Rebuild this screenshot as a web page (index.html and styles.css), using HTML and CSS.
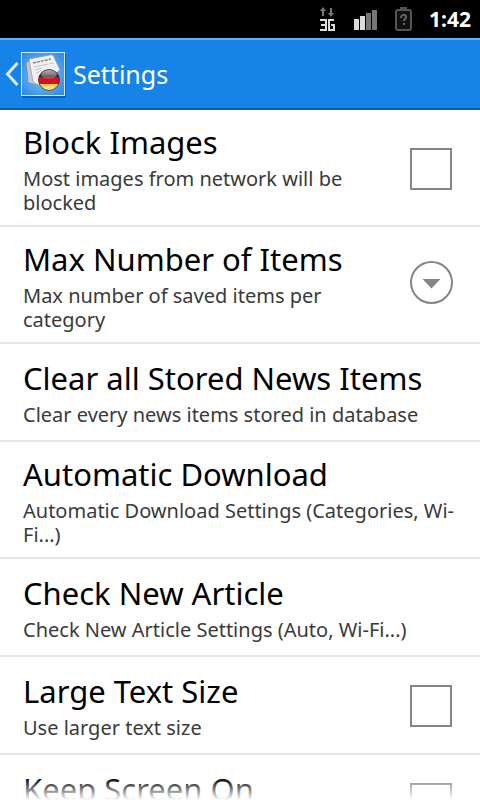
FILE: index.html
```html
<!DOCTYPE html>
<html lang="en">
<head>
<meta charset="utf-8">
<meta name="viewport" content="width=device-width, initial-scale=1">
<title>Settings</title>
<link rel="stylesheet" href="styles.css">
</head>
<body>
<div class="status">
  <svg class="status-icon" width="22" height="28" viewBox="0 0 22 28" aria-hidden="true">
    <g fill="none" stroke="#777" stroke-width="2"><path d="M7 11V5M15 3v6"/></g>
    <path fill="#777" d="M4 6l3-4 3 4zM12 8h6l-3 4z"/>
    <g fill="none" stroke="#ddd" stroke-width="2"><path d="M4 15h6v10H4M5 20h5M18 15h-5v10h5v-5h-3"/></g>
  </svg>
  <svg class="status-icon" width="26" height="28" viewBox="0 0 26 28" aria-hidden="true">
    <path fill="#ddd" d="M1 14h5v11H1zM7 11h5v14H7z"/>
    <path fill="#777" d="M13 8h5v17h-5zM19 5h5v20h-5z"/>
  </svg>
  <svg class="status-icon battery" width="20" height="28" viewBox="0 0 20 28" aria-hidden="true">
    <path fill="#555" d="M6 2h7v3H6z"/>
    <rect x="2" y="5" width="15" height="20" rx="2" fill="#111" stroke="#555" stroke-width="2"/>
    <path d="M7 13c0-4 5-4 5-1 0 2-2 2-2 4" fill="none" stroke="#666" stroke-width="2"/>
    <path fill="#666" d="M9 18h2v2H9z"/>
  </svg>
  <time class="clock">1:42</time>
</div>
<header class="bar">
  <a class="up" href="#" aria-label="Back">
    <svg width="66" height="56" viewBox="0 0 66 56" aria-hidden="true">
      <defs>
        <radialGradient id="glow" cx=".5" cy=".5" r=".7"><stop offset="0" stop-color="#a5d4fb"/><stop offset=".5" stop-color="#57a9ef"/><stop offset="1" stop-color="#2787e0"/></radialGradient>
        <linearGradient id="gloss" x1="0" y1="0" x2="0" y2="1"><stop offset="0" stop-color="#fff" stop-opacity=".7"/><stop offset="1" stop-color="#fff" stop-opacity=".12"/></linearGradient>
        <clipPath id="ball"><circle cx="49" cy="34" r="10.500"/></clipPath>
      </defs>
      <path d="M17.500 17L7.500 28 17.500 39" fill="none" stroke="#d9ecff" stroke-width="3"/>
      <rect x="22" y="8" width="44" height="44" fill="#0a4f94" opacity=".65"/>
      <rect x="21.500" y="6.500" width="43" height="43" fill="url(#glow)" stroke="#cde6fc"/>
      <path d="M26 17l5-4 9 27-11-3q-2-1-1-4z" fill="#c7c9d2" stroke="#777d8c" stroke-width=".7"/>
      <path d="M29 13l21-4q3-1 4 2l6 13-20 16-7-4z" fill="#f1f1f5" stroke="#8b93a5" stroke-width=".7"/>
      <path d="M33 17l18-4" stroke="#888" stroke-width="1.500" stroke-dasharray="3 1"/>
      <path d="M34 21l14-3M35 24l7-2M36 27l5-2M49 18l5-1" stroke="#c5c7ce"/>
      <g clip-path="url(#ball)">
        <path fill="#302a30" d="M38 23h22v9H38z"/>
        <path fill="#d50f28" d="M38 31h22v7H38z"/>
        <path fill="#f6d04b" d="M38 38h22v8H38z"/>
        <ellipse cx="49" cy="28" rx="8" ry="5" fill="url(#gloss)"/>
        <ellipse cx="49" cy="43" rx="6" ry="3" fill="#fff" opacity=".3"/>
      </g>
      <circle cx="49" cy="34" r="10.500" fill="none" stroke="#4d2730" stroke-width=".8"/>
    </svg>
  </a>
  <h1 class="heading">Settings</h1>
</header>
<main class="list">
  <label class="row tall">
    <span class="text"><span class="title">Block Images</span><span class="sub">Most images from network will be blocked</span></span>
    <input class="check" type="checkbox">
  </label>
  <button class="row tall" type="button">
    <span class="text"><span class="title">Max Number of Items</span><span class="sub">Max number of saved items per category</span></span>
    <svg class="more" width="43" height="49" viewBox="0 0 43 49" aria-hidden="true"><circle cx="21.500" cy="21.500" r="20.500" fill="#fff" stroke="#858585" stroke-width="2"/><path d="M12.500 18h18l-9 9.500z" fill="#858585"/></svg>
  </button>
  <button class="row" type="button">
    <span class="text"><span class="title">Clear all Stored News Items</span><span class="sub">Clear every news items stored in database</span></span>
  </button>
  <button class="row tall" type="button">
    <span class="text"><span class="title">Automatic Download</span><span class="sub">Automatic Download Settings (Categories, Wi-Fi...)</span></span>
  </button>
  <button class="row" type="button">
    <span class="text"><span class="title">Check New Article</span><span class="sub">Check New Article Settings (Auto, Wi-Fi...)</span></span>
  </button>
  <label class="row">
    <span class="text"><span class="title">Large Text Size</span><span class="sub">Use larger text size</span></span>
    <input class="check" type="checkbox">
  </label>
  <label class="row">
    <span class="text"><span class="title">Keep Screen On</span><span class="sub"></span></span>
    <input class="check" type="checkbox">
  </label>
</main>
</body>
</html>
```
FILE: styles.css
```css
* { box-sizing: border-box; }

body {
  margin: 0;
  height: 100vh;
  display: flex;
  flex-direction: column;
  overflow: hidden;
  background: #fff;
  color: #000;
  font-family: "Noto Sans", "Open Sans", sans-serif;
}

.status {
  flex: none;
  height: 38px;
  padding: 0 9px;
  display: flex;
  align-items: center;
  justify-content: flex-end;
  gap: 15px;
  background: #000;
}

.status-icon { flex: none; }

.clock {
  color: #fff;
  font-size: 21px;
  font-weight: 700;
  line-height: 38px;
}

.bar {
  flex: none;
  height: 72px;
  display: flex;
  align-items: center;
  gap: 7px;
  background: #1683e8;
  border-top: 2px solid #5fb0fa;
  border-bottom: 2px solid #0b5dab;
}

.up { display: flex; }

.heading {
  margin: 0;
  color: #fff;
  font-size: 25px;
  font-weight: 400;
  line-height: 36px;
}

.list {
  flex: 1;
  min-height: 0;
  overflow: hidden;
  position: relative;
}

.list::after {
  content: "";
  position: absolute;
  inset: auto 0 0;
  height: 22px;
  background: linear-gradient(rgba(255, 255, 255, 0), #fff);
  pointer-events: none;
}

.row {
  width: 100%;
  height: 98px;
  padding: 2px 20px 0 23px;
  display: flex;
  align-items: center;
  gap: 20px;
  border: 0;
  border-bottom: 2px solid #e6e6e6;
  background: none;
  color: inherit;
  font-family: inherit;
  text-align: left;
}

.tall { height: 117px; }

.text {
  flex: 1;
  min-width: 0;
  display: flex;
  flex-direction: column;
  gap: 6px;
}

.title {
  font-size: 31px;
  line-height: 38px;
}

.sub {
  min-height: 24px;
  color: #3a3a3a;
  font-size: 20px;
  line-height: 24px;
}

.check {
  appearance: none;
  flex: none;
  width: 42px;
  height: 42px;
  margin: 0 8px 0 0;
  border: 2px solid #858585;
  background: #fff;
}

.more {
  flex: none;
  margin-right: 7px;
}
```
